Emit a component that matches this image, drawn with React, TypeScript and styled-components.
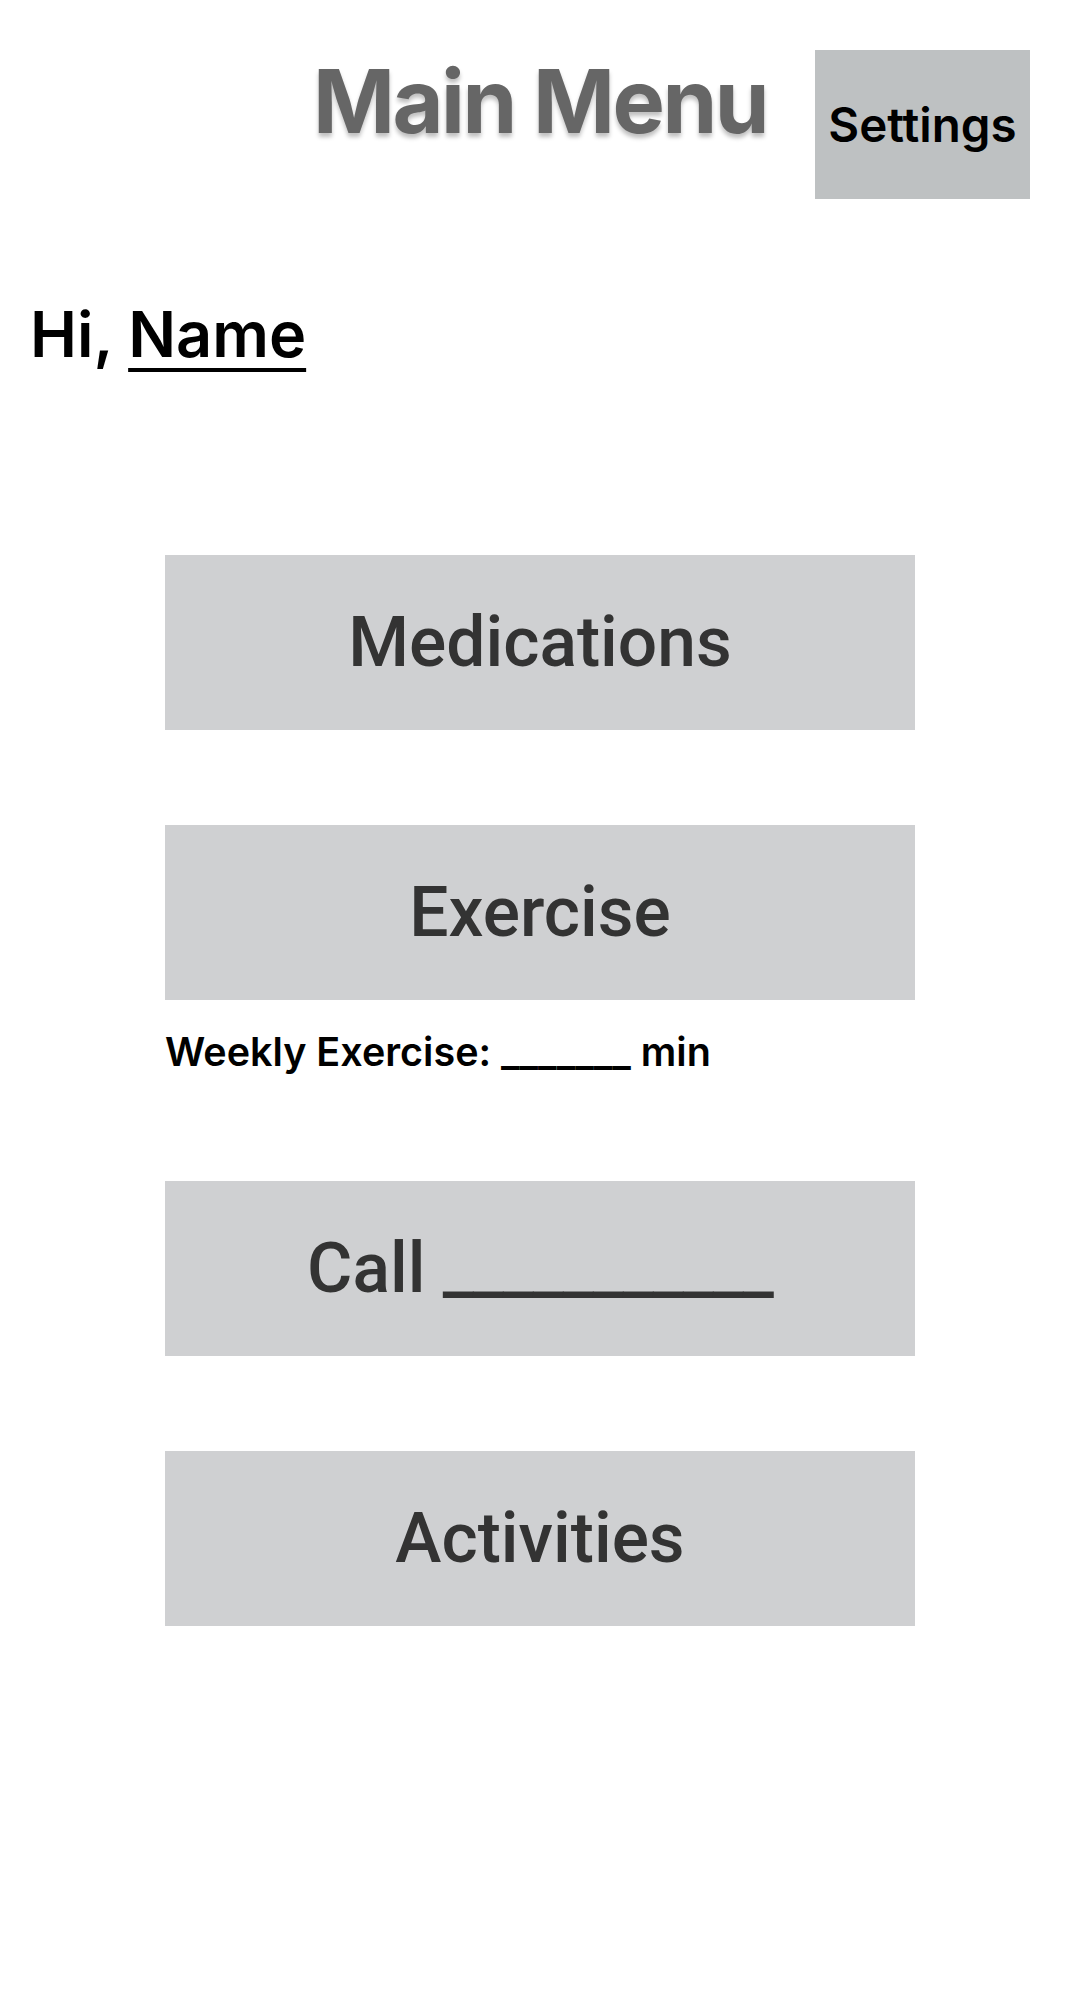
import styled, { createGlobalStyle } from 'styled-components';

const GlobalStyle = createGlobalStyle`
  body {
    margin: 0;
    background: #ffffff;
    font-family: Inter, "Noto Sans", sans-serif;
  }
`

const Page = styled.div`
  width: 1080px;
  min-height: 2000px;
  background: #ffffff;
`

const Header = styled.header`
  display: grid;
  grid-template-columns: 1fr auto 1fr;
  align-items: start;
  padding-top: 48px;
`

const Title = styled.h1`
  grid-column: 2;
  margin: 0;
  font-family: Inter, sans-serif;
  font-weight: 700;
  font-size: 88px;
  letter-spacing: -2.5px;
  line-height: normal;
  color: #666666;
  text-shadow: 0 4px 4px rgba(0, 0, 0, 0.25);
`

const SettingsButton = styled.button`
  grid-column: 3;
  justify-self: end;
  width: 215px;
  height: 149px;
  margin: 2px 50px 0 0;
  padding: 0;
  border: none;
  background: #bec1c2;
  color: #000000;
  font-family: Inter, sans-serif;
  font-weight: 600;
  font-size: 47.5px;
  white-space: nowrap;
  display: flex;
  align-items: center;
  justify-content: center;
  cursor: pointer;
`

const Greeting = styled.p`
  margin: 97px 0 0;
  padding: 0 0 0 30px;
  height: 76px;
  font-family: Inter, sans-serif;
  font-weight: 600;
  font-size: 63px;
  line-height: 76px;
  color: #000000;
`

const UserName = styled.span`
  text-decoration: underline;
  text-decoration-thickness: 4px;
  text-underline-offset: 11px;
`

const MenuList = styled.nav`
  display: flex;
  flex-direction: column;
  align-items: center;
  gap: 95px;
  margin-top: 183px;
`

const MenuGroup = styled.div`
  display: flex;
  flex-direction: column;
  width: 750px;
`

const MenuButton = styled.button`
  width: 750px;
  height: 175px;
  border: none;
  padding: 0;
  background: #cfd0d2;
  color: #333333;
  font-family: Roboto, "Liberation Sans", sans-serif;
  font-weight: 500;
  font-size: 69.5px;
  white-space: pre;
  display: flex;
  align-items: center;
  justify-content: center;
  cursor: pointer;
`

const Blank = styled.span`
  letter-spacing: -1.1px;
`

const Note = styled.p`
  margin: 28px 0 10px;
  font-family: Inter, sans-serif;
  font-weight: 600;
  font-size: 39.5px;
  line-height: 48px;
  color: #000000;
`

export default function App() {
  return (
    <Page>
      <GlobalStyle />
      <Header>
        <Title>Main Menu</Title>
        <SettingsButton>Settings</SettingsButton>
      </Header>
      <Greeting>
        Hi, <UserName>Name</UserName>
      </Greeting>
      <MenuList>
        <MenuButton>Medications</MenuButton>
        <MenuGroup>
          <MenuButton>Exercise</MenuButton>
          <Note>Weekly Exercise: _______ min</Note>
        </MenuGroup>
        <MenuButton>
          Call <Blank>___________</Blank>
        </MenuButton>
        <MenuButton>Activities</MenuButton>
      </MenuList>
    </Page>
  )
}
